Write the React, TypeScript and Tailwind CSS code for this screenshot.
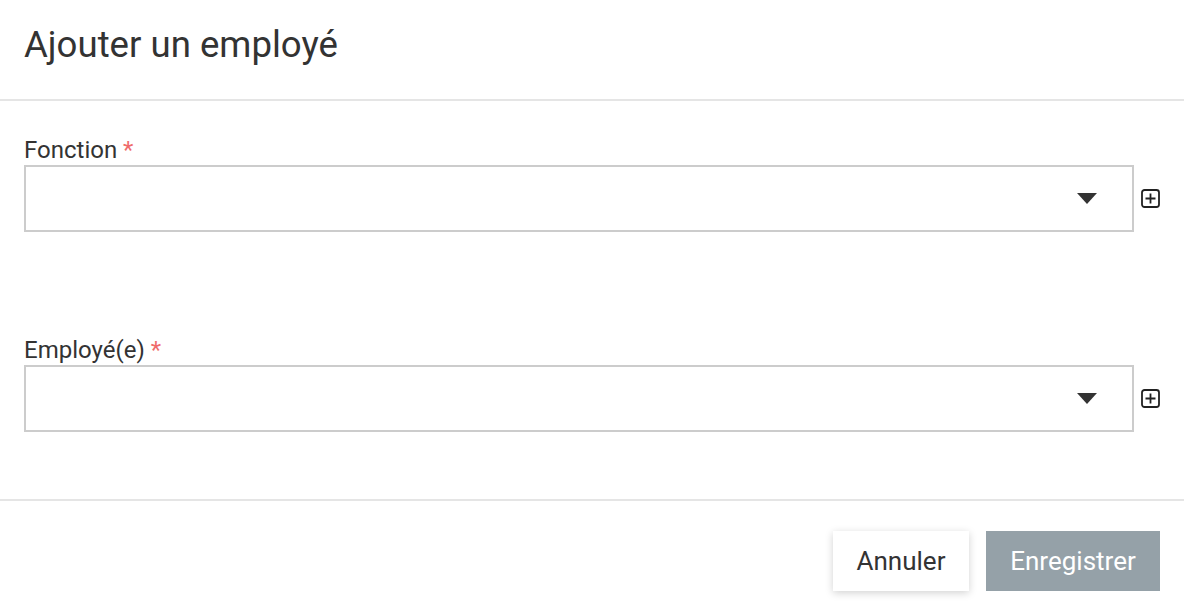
import React from 'react';

function PlusBox() {
  return (
    <svg width="19" height="19" viewBox="0 0 19 19" fill="none" stroke="#222" strokeWidth="1.8">
      <rect x="1" y="1" width="17" height="17" rx="2.5" />
      <path d="M9.5 4.5v10M4.5 9.5h10" />
    </svg>
  );
}

function SelectField({ label }: { label: string }) {
  return (
    <div>
      <div className="text-[24px] leading-[30px] text-[#333]">
        {label} <span className="text-[#ef6b6b]">*</span>
      </div>
      <div className="flex items-center gap-[7px]">
        <div className="flex h-[67px] w-[1110px] items-center justify-end border-2 border-[#cccccc] bg-white pr-[35px]">
          <svg width="20" height="11" viewBox="0 0 20 11">
            <path d="M0 0h20L10 11z" fill="#333" />
          </svg>
        </div>
        <PlusBox />
      </div>
    </div>
  );
}

export default function App() {
  return (
    <div className="h-[610px] w-[1184px] bg-white font-['Roboto',sans-serif] text-[#333]">
      <div className="h-[101px] border-b-2 border-[#e5e5e5] px-6 pt-[24px]">
        <h1 className="text-[36.6px] font-normal leading-[42px]">Ajouter un employé</h1>
      </div>
      <div className="flex h-[398px] flex-col gap-[103px] px-6 pt-[34px]">
        <SelectField label="Fonction" />
        <SelectField label="Employé(e)" />
      </div>
      <div className="flex justify-end gap-[17px] border-t-2 border-[#e5e5e5] px-6 pt-[30px]">
        <button className="h-[60px] w-[136px] bg-white text-[26px] text-[#333] shadow-[0_2px_8px_rgba(0,0,0,0.18)]">
          Annuler
        </button>
        <button className="h-[60px] w-[174px] bg-[#95a1a8] text-[26px] text-white">
          Enregistrer
        </button>
      </div>
    </div>
  );
}
